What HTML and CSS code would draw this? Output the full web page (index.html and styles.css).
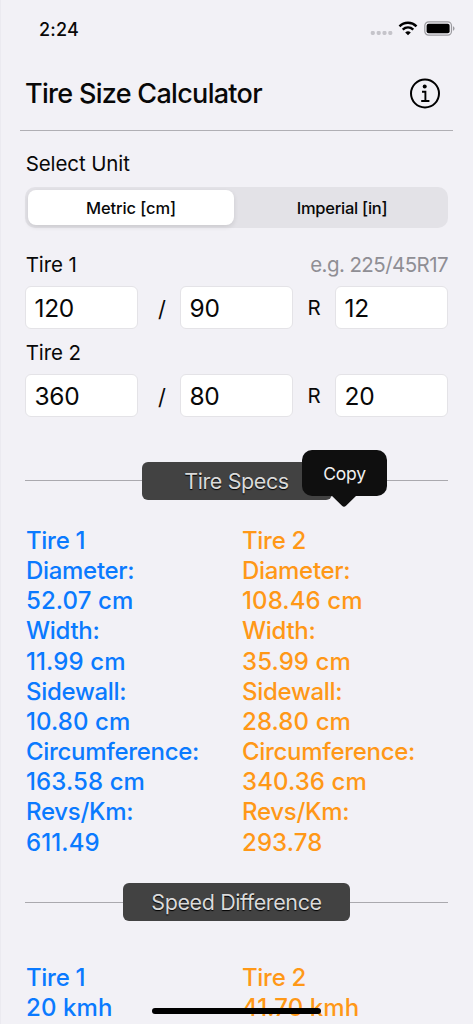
FILE: index.html
```html
<!DOCTYPE html>
<html lang="en">
<head>
<meta charset="utf-8">
<meta name="viewport" content="width=device-width, initial-scale=1">
<title>Tire Size Calculator</title>
<link rel="stylesheet" href="styles.css">
</head>
<body>
<div class="screen">
  <div class="status">
    <span class="time">2:24</span>
    <div class="status-icons">
      <svg class="signal" width="23" height="6" viewBox="0 0 23 6" fill="#c5c4ca"><rect x="0.8" y="1" width="4" height="4" rx="1.4"/><rect x="6.7" y="1" width="4" height="4" rx="1.4"/><rect x="12.5" y="1" width="4" height="4" rx="1.4"/><rect x="18.3" y="1" width="4" height="4" rx="1.4"/></svg>
      <svg class="wifi" width="20" height="15" viewBox="0 0 20 15" fill="none" stroke="#000" stroke-width="2.5"><path d="M1.5 5.3C6.2 .7 13.8 .7 18.5 5.3"/><path d="M4.7 8.6C7.8 5.8 12.2 5.8 15.3 8.6"/><path d="M10 14.3L7.2 11.4Q10 9.2 12.8 11.4Z" fill="#000" stroke="none"/></svg>
      <svg class="battery" width="31" height="15" viewBox="0 0 31 15"><rect x=".8" y=".9" width="26.7" height="13.2" rx="3.8" fill="none" stroke="#9c9ba0" stroke-width="1.2"/><rect x="2.6" y="2.7" width="23" height="9.6" rx="2" fill="#000"/><path d="M29 5.2Q30.5 5.8 30.5 7.5T29 9.8Z" fill="#9c9ba0"/></svg>
    </div>
  </div>
  <header class="header">
    <h1 class="title">Tire Size Calculator</h1>
    <svg class="info" width="32" height="32" viewBox="0 0 32 32" fill="none" stroke="#000" stroke-width="2"><circle cx="16" cy="15.5" r="14"/><circle cx="15.7" cy="8.5" r="2" fill="#000" stroke="none"/><path d="M13 13.7h3.4v9.3M12.2 23h8.2" stroke-width="1.9"/></svg>
  </header>
  <main class="content">
    <div class="label unit-label">Select Unit</div>
    <div class="segmented">
      <div class="segment selected">Metric [cm]</div>
      <div class="segment imperial">Imperial [in]</div>
    </div>
    <div class="label-row first"><span class="label">Tire 1</span><span class="label hint">e.g. 225/45R17</span></div>
    <div class="fields">
      <div class="field">120</div><span class="sep slash">/</span><div class="field">90</div><span class="sep">R</span><div class="field">12</div>
    </div>
    <div class="label-row second"><span class="label">Tire 2</span></div>
    <div class="fields">
      <div class="field">360</div><span class="sep slash">/</span><div class="field">80</div><span class="sep">R</span><div class="field">20</div>
    </div>
    <div class="divider specs">
      <div class="badge">Tire Specs</div>
      <div class="tooltip">Copy<svg class="arrow" width="26" height="13" viewBox="0 0 26 13"><path d="M0 0H26L15 10.8Q13 12.8 11 10.8Z" fill="#0f0f0f"/></svg></div>
    </div>
    <div class="columns">
      <div class="col blue"><div>Tire 1</div><div>Diameter:</div><div class="num">52.07 cm</div><div>Width:</div><div class="num">11.99 cm</div><div>Sidewall:</div><div class="num">10.80 cm</div><div>Circumference:</div><div class="num">163.58 cm</div><div>Revs/Km:</div><div class="num">611.49</div></div>
      <div class="col orange"><div>Tire 2</div><div>Diameter:</div><div class="num">108.46 cm</div><div>Width:</div><div class="num">35.99 cm</div><div>Sidewall:</div><div class="num">28.80 cm</div><div>Circumference:</div><div class="num">340.36 cm</div><div>Revs/Km:</div><div class="num">293.78</div></div>
    </div>
    <div class="divider speed"><div class="badge wide">Speed Difference</div></div>
    <div class="columns">
      <div class="col blue"><div>Tire 1</div><div class="num">20 kmh</div></div>
      <div class="col orange"><div>Tire 2</div><div class="num">41.70 kmh</div></div>
    </div>
  </main>
  <div class="home-bar"></div>
</div>
</body>
</html>
```
FILE: styles.css
```css
* { box-sizing: border-box; }
body { margin: 0; background: #f2f1f6; color: #080808; font-family: Inter, "Liberation Sans", sans-serif; }
.screen { position: relative; width: 473px; height: 1024px; overflow: hidden; border-left: 1px solid #ebeaf0; }
.status { height: 57px; padding: 0 18px 0 38px; display: flex; align-items: center; justify-content: space-between; }
.time { padding-top: 2px; font-size: 18px; font-weight: 550; letter-spacing: .2px; }
.status-icons { display: flex; align-items: center; }
.signal { margin: 9px 5px 0 0; }
.wifi { margin-right: 6px; }
.header { height: 74px; margin: 0 20px 0 19px; padding: 0 12px 0 5px; display: flex; align-items: center; justify-content: space-between; border-bottom: 1px solid #b0afb4; }
.title { margin: 0; font-size: 27px; font-weight: 500; letter-spacing: -.7px; white-space: nowrap; }
.content { padding: 0 25px 0 24px; }
.label { font-size: 20.5px; line-height: 27px; letter-spacing: -.1px; padding-left: .7px; }
.unit-label { margin-top: 19px; }
.segmented { display: flex; height: 41px; margin-top: 10px; padding: 3px; border-radius: 10px; background: #e3e2e7; }
.segment { flex: 1; display: flex; align-items: center; justify-content: center; font-size: 16.5px; font-weight: 500; letter-spacing: -.25px; }
.selected { flex: 0 0 206px; background: #fff; border-radius: 8px; box-shadow: 0 2px 5px #0000001c; letter-spacing: -.1px; }
.imperial { padding-left: 5px; }
.label-row { display: flex; justify-content: space-between; height: 26px; }
.first { margin-top: 23px; }
.second { margin-top: 10px; }
.hint { color: #8f8e94; letter-spacing: -.57px; }
.fields { display: grid; grid-template-columns: 113px 42px 113px 42px 113px; height: 43px; margin-top: 9px; }
.field { height: 43px; padding-left: 8.5px; border: 1px solid #e4e3e7; border-radius: 6px; background: #fff; font-size: 24.5px; line-height: 42px; letter-spacing: -.3px; }
.sep { font-size: 20.5px; line-height: 44px; text-align: center; }
.slash { padding-left: 6px; font-size: 22px; line-height: 47px; }
.divider { position: relative; height: 39px; display: flex; align-items: center; }
.divider::before, .divider::after { content: ""; flex: 1; height: 1px; background: #aaa9ae; }
.specs { margin-top: 44px; }
.speed { margin-top: 25px; }
.badge { width: 190px; height: 38px; border-radius: 6px; background: #424242; color: #dadada; font-size: 21.5px; line-height: 38px; letter-spacing: -.4px; text-align: center; text-shadow: 0 1px 1px #000; }
.wide { width: 227px; }
.tooltip { position: absolute; left: 277px; top: -11px; width: 85px; height: 46px; border-radius: 10px; background: #0f0f0f; color: #f1f1f1; font-size: 17.5px; line-height: 47px; letter-spacing: -.2px; text-align: center; }
.arrow { position: absolute; left: 29px; top: 45px; }
.columns { display: grid; grid-template-columns: 216px 1fr; margin-top: 26px; padding-left: 1px; font-size: 24px; font-weight: 480; line-height: 30.15px; letter-spacing: -.3px; white-space: nowrap; }
.num { letter-spacing: .1px; }
.speed + .columns { margin-top: 41px; }
.blue { color: #0a7aff; }
.orange { color: #ff9817; }
.home-bar { position: absolute; left: 151px; top: 1008px; width: 169px; height: 6px; border-radius: 3px; background: #000; }
```
